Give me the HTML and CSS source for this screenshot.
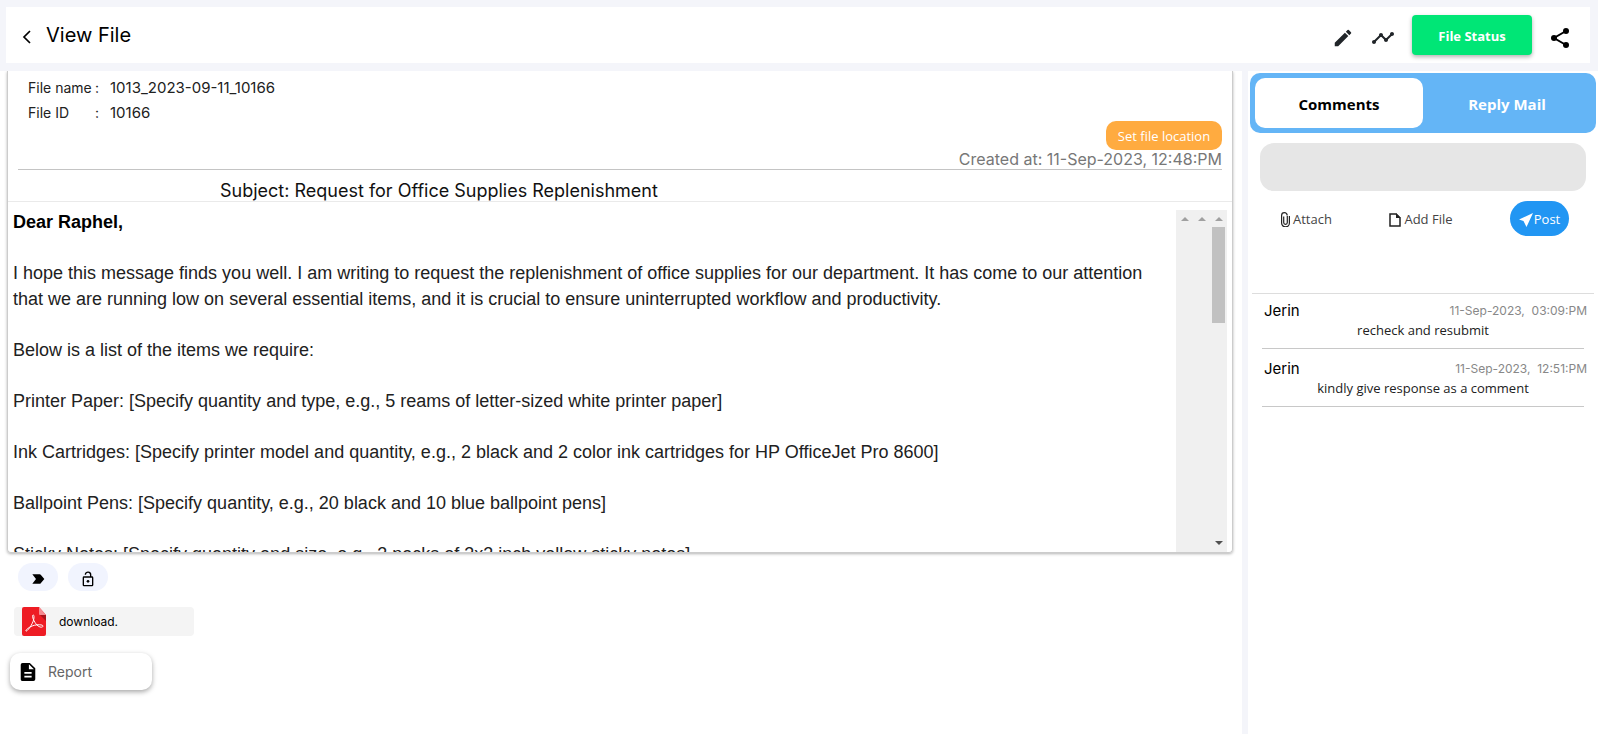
FILE: index.html
```
<!DOCTYPE html>
<html lang="en">
<head>
<meta charset="utf-8">
<title>View File</title>
<link rel="stylesheet" href="styles.css">
</head>
<body>
<header class="topbar">
  <button class="icon-btn back" aria-label="Back"><svg width="10" height="14" viewBox="0 0 10 14"><path d="M8 1 2 7l6 6" fill="none" stroke="#000" stroke-width="1.700"/></svg></button>
  <h1 class="title">View File</h1>
  <div class="tools">
    <button class="icon-btn" aria-label="Edit"><svg width="22" height="22" viewBox="0 0 24 24"><path fill="#212529" d="M3 17.25V21h3.75L17.81 9.94l-3.75-3.75L3 17.25zM20.71 7.04a1 1 0 0 0 0-1.41l-2.34-2.34a1 1 0 0 0-1.41 0l-1.83 1.83 3.75 3.75 1.83-1.83z"/></svg></button>
    <button class="icon-btn" aria-label="Timeline"><svg width="24" height="24" viewBox="0 0 24 24"><path fill="#212529" d="M23 8c0 1.1-.9 2-2 2-.18 0-.35-.02-.51-.07l-3.56 3.55c.05.16.07.34.07.52 0 1.1-.9 2-2 2s-2-.9-2-2c0-.18.02-.36.07-.52l-2.55-2.55c-.16.05-.34.07-.52.07s-.36-.02-.52-.07l-4.55 4.56c.05.16.07.33.07.51 0 1.1-.9 2-2 2s-2-.9-2-2 .9-2 2-2c.18 0 .35.02.51.07l4.56-4.55C8.02 9.36 8 9.18 8 9c0-1.1.9-2 2-2s2 .9 2 2c0 .18-.02.36-.07.52l2.55 2.55c.16-.05.34-.07.52-.07s.36.02.52.07l3.55-3.56C19.02 8.35 19 8.18 19 8c0-1.1.9-2 2-2s2 .9 2 2z"/></svg></button>
    <button class="status">File Status</button>
    <button class="icon-btn share" aria-label="Share"><svg width="24" height="24" viewBox="0 0 24 24"><path d="M18 5 6 12l12 7" fill="none" stroke="#000" stroke-width="2"/><circle cx="18" cy="5" r="3"/><circle cx="6" cy="12" r="3"/><circle cx="18" cy="19" r="3"/></svg></button>
  </div>
</header>
<div class="columns">
  <main class="main">
    <section class="card">
      <dl class="meta">
        <dt>File name</dt><dd>:</dd><dd class="value">1013_2023-09-11_10166</dd>
        <dt>File ID</dt><dd>:</dd><dd class="value">10166</dd>
      </dl>
      <div class="created">
        <button class="location">Set file location</button>
        <span>Created at: 11-Sep-2023, 12:48:PM</span>
      </div>
      <h2 class="subject">Subject: Request for Office Supplies Replenishment</h2>
      <div class="letter">
        <div class="letter-text">
          <p><b>Dear Raphel,</b></p>
          <p>I hope this message finds you well. I am writing to request the replenishment of office supplies for our department. It has come to our attention that we are running low on several essential items, and it is crucial to ensure uninterrupted workflow and productivity.</p>
          <p>Below is a list of the items we require:</p>
          <p>Printer Paper: [Specify quantity and type, e.g., 5 reams of letter-sized white printer paper]</p>
          <p>Ink Cartridges: [Specify printer model and quantity, e.g., 2 black and 2 color ink cartridges for HP OfficeJet Pro 8600]</p>
          <p>Ballpoint Pens: [Specify quantity, e.g., 20 black and 10 blue ballpoint pens]</p>
          <p>Sticky Notes: [Specify quantity and size, e.g., 3 packs of 3x3 inch yellow sticky notes]</p>
        </div>
        <div class="scroll" aria-hidden="true">
          <div class="track"><i class="up"></i></div>
          <div class="track"><i class="up"></i></div>
          <div class="track"><i class="up"></i><i class="thumb"></i><i class="down"></i></div>
        </div>
      </div>
    </section>
    <div class="chips">
      <button class="chip" aria-label="Label"><svg width="16" height="16" viewBox="0 0 24 24"><path d="M3.500 19h11c.67 0 1.300-.3 1.600-.8L21.500 12l-5.400-6.200c-.3-.5-.9-.8-1.600-.8h-11L9 12z"/></svg></button>
      <button class="chip" aria-label="Unlock"><svg width="16" height="16" viewBox="0 0 24 24"><rect x="5" y="9" width="14" height="13" rx="1" fill="none" stroke="#000" stroke-width="2"/><path d="M8 5.500a4 4 0 0 1 8 .5v3" fill="none" stroke="#000" stroke-width="2"/><circle cx="12" cy="15.500" r="2"/></svg></button>
    </div>
    <a class="download" href="#">
      <svg width="24" height="29" viewBox="0 0 24 29"><path fill="#ee1c24" d="M2 0h15l7 8v19a2 2 0 0 1-2 2H2a2 2 0 0 1-2-2V2a2 2 0 0 1 2-2z"/><path fill="#f58a90" d="M17 0l7 8h-6a1 1 0 0 1-1-1z"/><path fill="#a8141b" d="M18 8h6v6z"/><path d="M11 8c-1.500 1 1 7 4 10s6 2.500 6 1-7-2-12 .5-6 5-4.500 4.500S12.500 15 12 9.500c0-1-.5-1.800-1-1.500z" fill="none" stroke="#fff"/></svg>
      <span>download.</span>
    </a>
    <button class="report"><svg width="18" height="20" viewBox="3 1 18 22"><path d="M14 2H6a2 2 0 0 0-2 2v16c0 1.100.9 2 2 2h12a2 2 0 0 0 2-2V8zm2 16H8v-2h8zm0-4H8v-2h8zm-3-5V3.500L18.500 9z"/></svg>Report</button>
  </main>
  <aside class="side">
    <div class="tabs">
      <button class="tab active">Comments</button>
      <button class="tab">Reply Mail</button>
    </div>
    <textarea class="comment-box" aria-label="Comment"></textarea>
    <div class="actions">
      <button class="action"><svg width="9" height="15" viewBox="0 0 9 15"><path d="M6.300 4v6.500a1.800 1.800 0 0 1-3.600 0V4.500M8.400 4v7a3.900 3.900 0 0 1-7.800 0V3.500a2.800 2.800 0 0 1 5.600 0" fill="none" stroke="#222" stroke-width="1.200"/></svg>Attach</button>
      <button class="action"><svg width="12" height="14" viewBox="0 0 12 14"><path d="M1 1h6l4 4v8H1z" fill="none" stroke="#222" stroke-width="1.500"/><path d="M7 0v5h5z" fill="#222"/></svg>Add File</button>
      <button class="post"><svg width="14" height="14" viewBox="0 0 14 14"><path d="M14 0 0 6.500l4.500 1.500 3 6z" fill="#fff"/></svg>Post</button>
    </div>
    <div class="comments">
      <article class="comment">
        <div class="row"><b>Jerin</b><time>11-Sep-2023,&nbsp; 03:09:PM</time></div>
        <p>recheck and resubmit</p>
      </article>
      <article class="comment">
        <div class="row"><b>Jerin</b><time>11-Sep-2023,&nbsp; 12:51:PM</time></div>
        <p>kindly give response as a comment</p>
      </article>
    </div>
  </aside>
</div>
</body>
</html>
```

FILE: styles.css
```
* { box-sizing: border-box; }
body {
  margin: 0;
  min-height: 100vh;
  display: flex;
  flex-direction: column;
  background: #f4f5fa;
  color: #212121;
  font-family: Inter, sans-serif;
}
button { border: 0; padding: 0; background: none; color: inherit; font: inherit; cursor: pointer; }
svg { display: block; flex: none; }
h1, h2, p, dl, dd { margin: 0; font-weight: 400; }

.topbar {
  display: flex;
  align-items: center;
  height: 56px;
  margin: 7px 8px 8px 6px;
  padding: 0 18px 0 16px;
  background: #fff;
}
.back { padding-top: 4px; }
.title { margin-left: 14px; font-size: 20px; line-height: 24px; color: #000; }
.tools { display: flex; align-items: center; margin-left: auto; }
.tools .icon-btn { margin: 6px 17px 0 0; }
.status {
  width: 120px;
  height: 40px;
  padding-top: 2px;
  border-radius: 4px;
  background: #00e676;
  box-shadow: 0 2px 4px rgba(0, 0, 0, .3);
  color: #fff;
  font: 700 13px "Open Sans", sans-serif;
}
.tools .share { margin: 6px 0 0 16px; }

.columns { flex: 1; display: grid; grid-template-columns: minmax(0, 1fr) 350px; gap: 6px; }
.main { padding: 0 9px 20px 7px; background: #fff; }
.card {
  border: 1px solid #ccc;
  border-top: 0;
  border-radius: 0 0 4px 4px;
  box-shadow: 0 1px 3px rgba(0, 0, 0, .3);
  clip-path: inset(0 -6px -6px -6px);
}
.meta {
  display: grid;
  grid-template-columns: 67px 15px 1fr;
  padding: 4px 20px 0;
  font-size: 14px;
  line-height: 25px;
}
.value { font-size: 15px; }
.created {
  display: flex;
  flex-direction: column;
  align-items: flex-end;
  margin: -4px 10px 0;
  border-bottom: 1px solid #c4c4c4;
  font-size: 16px;
  line-height: 19px;
  color: #777;
}
.location {
  width: 116px;
  height: 29px;
  border-radius: 10px;
  background: #ffab40;
  color: #fff;
  font: 400 13px "Open Sans", sans-serif;
}
.subject { padding: 10px 0 0 212px; font-size: 18px; line-height: 21px; color: #111; }
.letter { display: flex; height: 351px; border-top: 1px solid #eaeaea; }
.letter-text {
  flex: 1;
  min-width: 0;
  overflow: hidden;
  padding: 7px 20px 0 5px;
  font: 18px/26px "Liberation Sans", Arial, sans-serif;
}
.letter-text p + p { margin-top: 25px; }
.letter-text b { color: #000; }
.scroll { display: flex; margin: 8px 5px 0 0; background: #f0f0f0; }
.track { display: flex; flex-direction: column; align-items: center; width: 17px; padding: 7px 0; }
.up { border: 4px solid transparent; border-top: 0; border-bottom-color: #a0a0a0; }
.thumb { width: 13px; height: 96px; margin-top: 6px; background: #c1c1c1; }
.down { margin-top: auto; border: 4px solid transparent; border-bottom: 0; border-top-color: #505050; }

.chips { display: flex; gap: 10px; padding: 10px 0 0 11px; }
.chip { display: grid; place-items: center; width: 40px; height: 28px; padding-top: 3px; border-radius: 14px; background: #f1f4fe; }
.download {
  display: flex;
  align-items: center;
  gap: 13px;
  width: 180px;
  height: 29px;
  margin: 16px 0 17px 7px;
  padding-left: 8px;
  border-radius: 4px;
  background: #f4f4f4;
  color: #000;
  font-size: 12px;
  text-decoration: none;
}
.report {
  display: flex;
  align-items: center;
  gap: 11px;
  width: 142px;
  height: 37px;
  margin-left: 3px;
  padding-left: 9px;
  border-radius: 10px;
  box-shadow: 0 2px 5px rgba(0, 0, 0, .35);
  color: #666;
  font-size: 14px;
}

.side { padding: 2px 2px 0; background: #fff; font-family: "Open Sans", sans-serif; }
.tabs { display: grid; grid-template-columns: 1fr 1fr; padding: 5px; border-radius: 10px; background: #64b5f6; }
.tab { height: 50px; padding-top: 2px; border-radius: 10px; color: #fff; font-size: 15px; font-weight: 700; }
.tab.active { background: #fff; color: #000; }
.comment-box {
  display: block;
  width: calc(100% - 20px);
  height: 48px;
  margin: 10px 10px 0;
  border: 0;
  border-radius: 14px;
  background: #e6e6e6;
  resize: none;
}
.actions { display: flex; align-items: center; justify-content: space-between; margin: 10px 27px 57px 31px; font-size: 13px; }
.action { display: flex; align-items: center; gap: 3px; color: #444; }
.action svg { margin-top: 2px; }
.post { display: flex; align-items: center; justify-content: center; gap: 1px; width: 59px; height: 35px; border-radius: 18px; background: #2196f3; color: #fff; }
.post svg { margin-top: 3px; }
.comments { margin: 0 2px; border-top: 1px solid #ddd; padding-top: 7px; }
.comment { height: 48px; margin: 0 10px 10px; border-bottom: 1px solid #c8c8c8; font-size: 13px; line-height: 19px; }
.row { display: flex; justify-content: space-between; align-items: center; margin: 0 -3px 0 2px; line-height: 20px; font-family: Inter, sans-serif; }
.row b { color: #000; font-size: 15px; font-weight: 400; }
.row time { color: #888; font-size: 12px; }
.comment p { text-align: center; }
```
